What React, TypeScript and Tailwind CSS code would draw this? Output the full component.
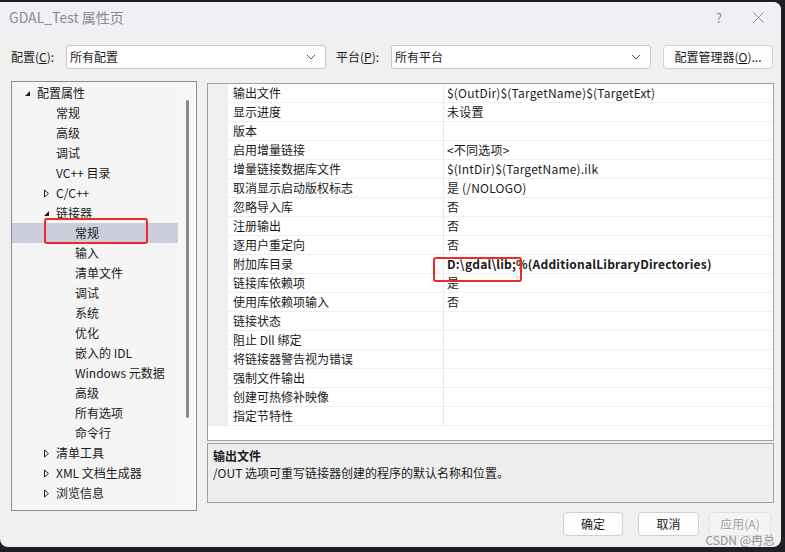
import React from "react";

const FONT = { fontFamily: '"Noto Sans CJK SC", "Noto Sans", sans-serif' };

type Node = { label: string; level: number; arrow?: "open" | "closed"; selected?: boolean };

const tree: Node[] = [
  { label: "配置属性", level: 0, arrow: "open" },
  { label: "常规", level: 1 },
  { label: "高级", level: 1 },
  { label: "调试", level: 1 },
  { label: "VC++ 目录", level: 1 },
  { label: "C/C++", level: 1, arrow: "closed" },
  { label: "链接器", level: 1, arrow: "open" },
  { label: "常规", level: 2, selected: true },
  { label: "输入", level: 2 },
  { label: "清单文件", level: 2 },
  { label: "调试", level: 2 },
  { label: "系统", level: 2 },
  { label: "优化", level: 2 },
  { label: "嵌入的 IDL", level: 2 },
  { label: "Windows 元数据", level: 2 },
  { label: "高级", level: 2 },
  { label: "所有选项", level: 2 },
  { label: "命令行", level: 2 },
  { label: "清单工具", level: 1, arrow: "closed" },
  { label: "XML 文档生成器", level: 1, arrow: "closed" },
  { label: "浏览信息", level: 1, arrow: "closed" },
];

const props: [string, string, boolean?][] = [
  ["输出文件", "$(OutDir)$(TargetName)$(TargetExt)"],
  ["显示进度", "未设置"],
  ["版本", ""],
  ["启用增量链接", "<不同选项>"],
  ["增量链接数据库文件", "$(IntDir)$(TargetName).ilk"],
  ["取消显示启动版权标志", "是 (/NOLOGO)"],
  ["忽略导入库", "否"],
  ["注册输出", "否"],
  ["逐用户重定向", "否"],
  ["附加库目录", "D:\\gdal\\lib;%(AdditionalLibraryDirectories)", true],
  ["链接库依赖项", "是"],
  ["使用库依赖项输入", "否"],
  ["链接状态", ""],
  ["阻止 Dll 绑定", ""],
  ["将链接器警告视为错误", ""],
  ["强制文件输出", ""],
  ["创建可热修补映像", ""],
  ["指定节特性", ""],
];

const Chevron = () => (
  <svg width="10" height="6" viewBox="0 0 10 6" className="text-[#555]">
    <path d="M1 1l4 4 4-4" fill="none" stroke="currentColor" strokeWidth="1" />
  </svg>
);

const Arrow = ({ kind }: { kind: "open" | "closed" }) =>
  kind === "open" ? (
    <svg width="7" height="7" viewBox="0 0 7 7">
      <path d="M6 1v5H1z" fill="#1e1e1e" />
    </svg>
  ) : (
    <svg width="7" height="9" viewBox="0 0 7 9">
      <path d="M1.5 1l4 3.5-4 3.5z" fill="none" stroke="#1e1e1e" strokeWidth="1" />
    </svg>
  );

const Select = ({ value, w }: { value: string; w: string }) => (
  <div className={`${w} h-[24px] bg-white border border-[#c8c8c8] rounded-[3px] flex items-center justify-between pl-[3px] pr-[9px] text-[12px] text-[#1a1a1a]`}>
    <span>{value}</span>
    <Chevron />
  </div>
);

const Btn = ({ label, w, disabled }: { label: React.ReactNode; w: string; disabled?: boolean }) => (
  <div
    className={`${w} h-[24px] rounded-[4px] border flex items-center justify-center text-[12px] ${
      disabled ? "border-[#e2e2e2] bg-[#f5f5f5] text-[#a0a0a0]" : "border-[#d0d0d0] bg-[#fdfdfd] text-[#1a1a1a]"
    }`}
  >
    {label}
  </div>
);

export default function App() {
  return (
    <div className="w-[785px] h-[552px] bg-[#1e1f22] overflow-hidden pt-[2px]" style={FONT}>
      <div className="relative w-[781px] h-[545px] bg-[#f0f0f0] rounded-tr-[8px] rounded-b-[8px] flex flex-col overflow-hidden">
        {/* title bar */}
        <div className="h-[31px] bg-[#eff0f4] flex items-center justify-between pl-[9px] pr-[17px] shrink-0">
          <span className="text-[14px] text-[#8c8c8c]">GDAL_Test 属性页</span>
          <div className="flex items-center gap-[31px] text-[#8a8a8a]">
            <span className="text-[13px]">?</span>
            <svg width="11" height="11" viewBox="0 0 11 11">
              <path d="M.5.5l10 10M10.5.5l-10 10" stroke="#8a8a8a" strokeWidth="1" />
            </svg>
          </div>
        </div>

        {/* config row */}
        <div className="flex items-center pl-[11px] mt-[11px] h-[25px] shrink-0 text-[12px] text-[#1a1a1a]">
          <span className="w-[55px]">
            配置(<span className="underline">C</span>):
          </span>
          <Select value="所有配置" w="w-[260px]" />
          <span className="ml-[10px] w-[55px]">
            平台(<span className="underline">P</span>):
          </span>
          <Select value="所有平台" w="w-[260px]" />
          <div className="ml-[12px]">
            <Btn w="w-[110px]" label={<span>配置管理器(<span className="underline">O</span>)...</span>} />
          </div>
        </div>

        {/* main */}
        <div className="flex mt-[12px] pl-[11px] gap-[10px] shrink-0">
          {/* tree */}
          <div className="relative w-[186px] h-[430px] border border-[#8a8f96] bg-[#f5f5f5] flex">
            <div className="w-[166px] pt-[1px]">
              {tree.map((n, i) => (
                <div
                  key={i}
                  className={`h-[20px] flex items-center text-[12px] text-[#1a1a1a] ${n.selected ? "bg-[#cccedb]" : ""}`}
                >
                  <div className={`${n.level === 0 ? "w-[25px]" : n.level === 1 ? "w-[44px]" : "w-[63px]"} flex justify-end pr-[6px] shrink-0`}>
                    {n.arrow && <Arrow kind={n.arrow} />}
                  </div>
                  <span>{n.label}</span>
                </div>
              ))}
            </div>
            <div className="flex-1 bg-[#f7f7f7] flex justify-center pt-[18px]">
              <div className="w-[3px] h-[318px] bg-[#8a8a8a] rounded-full" />
            </div>
            {/* annotation */}
            <div className="absolute left-[32px] top-[136px] w-[104px] h-[26px] border-2 border-[#ee2a24] rounded-[3px]" />
          </div>

          {/* right column */}
          <div className="flex flex-col w-[567px]">
            <div className="relative h-[358px] mt-[2px] border border-[#a0a0a0] bg-white">
              {props.map(([k, v, bold], i) => (
                <div key={i} className="h-[19px] flex text-[12px] text-[#1a1a1a]">
                  <div className="w-[20px] bg-[#f0f0f0] shrink-0" />
                  <div className="w-[216px] border-b border-[#f0f0f0] border-r border-r-[#e8e8e8] pl-[5px] flex items-center whitespace-nowrap">
                    {k}
                  </div>
                  <div className={`flex-1 border-b border-[#f0f0f0] pl-[3px] flex items-center whitespace-nowrap tracking-[0.2px] ${bold ? "font-bold" : ""}`}>
                    {v}
                  </div>
                </div>
              ))}
              <div className="absolute left-[225px] top-[173px] w-[89px] h-[25px] border-2 border-[#ee2a24] rounded-[3px]" />
            </div>
            <div className="h-[60px] mt-[2px] border border-[#a0a0a0] bg-[#eeeeee] px-[5px] pt-[3px] text-[12px] text-[#1a1a1a] leading-[17px]">
              <div className="font-bold">输出文件</div>
              <div>/OUT 选项可重写链接器创建的程序的默认名称和位置。</div>
            </div>
          </div>
        </div>

        {/* buttons */}
        <div className="flex justify-end gap-[15px] pr-[10px] mt-[1px]">
          <Btn w="w-[60px]" label="确定" />
          <Btn w="w-[61px]" label="取消" />
          <div className="-ml-[5px]">
            <Btn w="w-[62px]" label="应用(A)" disabled />
          </div>
        </div>

        <span className="absolute right-[6px] bottom-[0px] text-[12px] leading-[14px] text-[#8a8a8a] opacity-90">CSDN @冉总</span>
      </div>
    </div>
  );
}
